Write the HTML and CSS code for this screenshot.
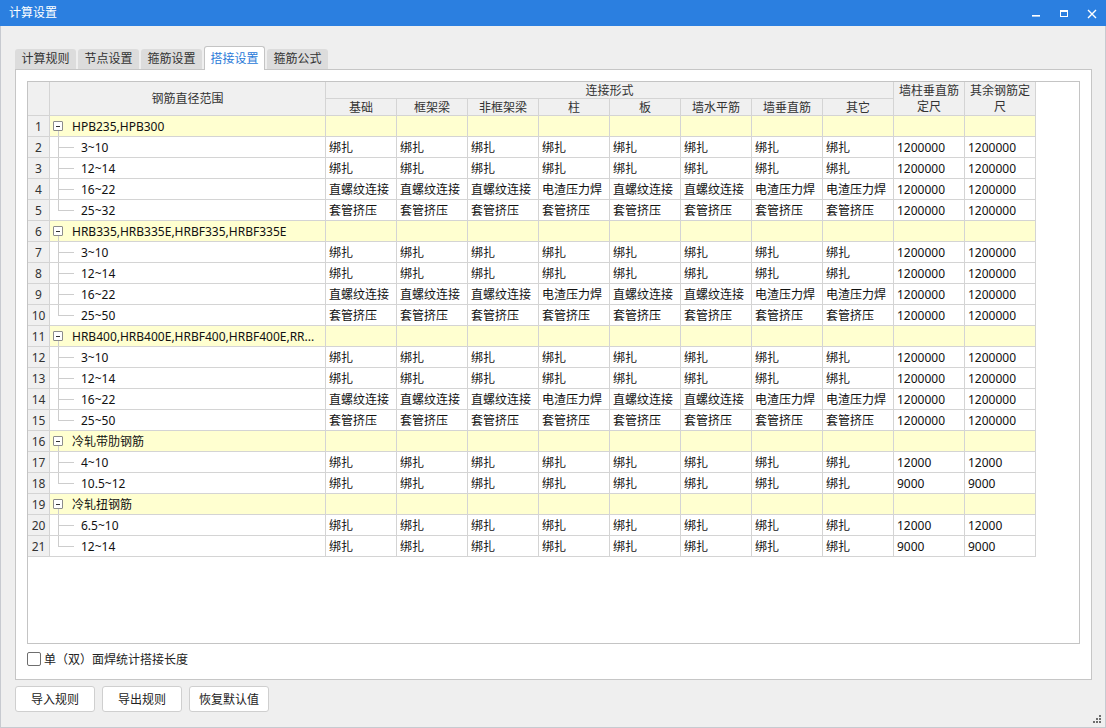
FILE: index.html
```html
<!DOCTYPE html>
<html lang="zh">
<head>
<meta charset="utf-8">
<title>计算设置</title>
<link rel="stylesheet" href="styles.css">
</head>
<body>
<div class="window">
  <div class="titlebar">
    <span class="title">计算设置</span>
    <svg class="controls" width="80" height="26" viewBox="0 0 80 26">
      <rect x="6" y="15" width="8" height="1.6" fill="#fff"/>
      <rect x="34.5" y="10.5" width="7" height="6" fill="none" stroke="#fff" stroke-width="1"/>
      <rect x="34" y="10" width="8" height="2" fill="#fff"/>
      <path d="M62 10 L70 18 M70 10 L62 18" stroke="#fff" stroke-width="1.4"/>
    </svg>
  </div>
  <div class="body">
    <div class="tabs">
      <div class="tab">计算规则</div>
      <div class="tab">节点设置</div>
      <div class="tab">箍筋设置</div>
      <div class="tab active">搭接设置</div>
      <div class="tab">箍筋公式</div>
    </div>
    <div class="panel">
      <div class="grid">
        <div class="c h rn hrn"></div>
        <div class="c h hname">钢筋直径范围</div>
        <div class="c h hconn">连接形式</div>
        <div class="c h hfix1">墙柱垂直筋定尺</div>
        <div class="c h hfix2">其余钢筋定尺</div>
        <div class="c h sub">基础</div>
        <div class="c h sub">框架梁</div>
        <div class="c h sub">非框架梁</div>
        <div class="c h sub">柱</div>
        <div class="c h sub">板</div>
        <div class="c h sub">墙水平筋</div>
        <div class="c h sub">墙垂直筋</div>
        <div class="c h sub">其它</div>

        <div class="c rn">1</div><div class="c nm g grp"><span class="tog"></span>HPB235,HPB300</div><div class="c g"></div><div class="c g"></div><div class="c g"></div><div class="c g"></div><div class="c g"></div><div class="c g"></div><div class="c g"></div><div class="c g"></div><div class="c g"></div><div class="c g"></div>
        <div class="c rn">2</div><div class="c nm ch">3~10</div><div class="c">绑扎</div><div class="c">绑扎</div><div class="c">绑扎</div><div class="c">绑扎</div><div class="c">绑扎</div><div class="c">绑扎</div><div class="c">绑扎</div><div class="c">绑扎</div><div class="c">1200000</div><div class="c">1200000</div>
        <div class="c rn">3</div><div class="c nm ch">12~14</div><div class="c">绑扎</div><div class="c">绑扎</div><div class="c">绑扎</div><div class="c">绑扎</div><div class="c">绑扎</div><div class="c">绑扎</div><div class="c">绑扎</div><div class="c">绑扎</div><div class="c">1200000</div><div class="c">1200000</div>
        <div class="c rn">4</div><div class="c nm ch">16~22</div><div class="c">直螺纹连接</div><div class="c">直螺纹连接</div><div class="c">直螺纹连接</div><div class="c">电渣压力焊</div><div class="c">直螺纹连接</div><div class="c">直螺纹连接</div><div class="c">电渣压力焊</div><div class="c">电渣压力焊</div><div class="c">1200000</div><div class="c">1200000</div>
        <div class="c rn">5</div><div class="c nm ch last">25~32</div><div class="c">套管挤压</div><div class="c">套管挤压</div><div class="c">套管挤压</div><div class="c">套管挤压</div><div class="c">套管挤压</div><div class="c">套管挤压</div><div class="c">套管挤压</div><div class="c">套管挤压</div><div class="c">1200000</div><div class="c">1200000</div>

        <div class="c rn">6</div><div class="c nm g grp"><span class="tog"></span>HRB335,HRB335E,HRBF335,HRBF335E</div><div class="c g"></div><div class="c g"></div><div class="c g"></div><div class="c g"></div><div class="c g"></div><div class="c g"></div><div class="c g"></div><div class="c g"></div><div class="c g"></div><div class="c g"></div>
        <div class="c rn">7</div><div class="c nm ch">3~10</div><div class="c">绑扎</div><div class="c">绑扎</div><div class="c">绑扎</div><div class="c">绑扎</div><div class="c">绑扎</div><div class="c">绑扎</div><div class="c">绑扎</div><div class="c">绑扎</div><div class="c">1200000</div><div class="c">1200000</div>
        <div class="c rn">8</div><div class="c nm ch">12~14</div><div class="c">绑扎</div><div class="c">绑扎</div><div class="c">绑扎</div><div class="c">绑扎</div><div class="c">绑扎</div><div class="c">绑扎</div><div class="c">绑扎</div><div class="c">绑扎</div><div class="c">1200000</div><div class="c">1200000</div>
        <div class="c rn">9</div><div class="c nm ch">16~22</div><div class="c">直螺纹连接</div><div class="c">直螺纹连接</div><div class="c">直螺纹连接</div><div class="c">电渣压力焊</div><div class="c">直螺纹连接</div><div class="c">直螺纹连接</div><div class="c">电渣压力焊</div><div class="c">电渣压力焊</div><div class="c">1200000</div><div class="c">1200000</div>
        <div class="c rn">10</div><div class="c nm ch last">25~50</div><div class="c">套管挤压</div><div class="c">套管挤压</div><div class="c">套管挤压</div><div class="c">套管挤压</div><div class="c">套管挤压</div><div class="c">套管挤压</div><div class="c">套管挤压</div><div class="c">套管挤压</div><div class="c">1200000</div><div class="c">1200000</div>

        <div class="c rn">11</div><div class="c nm g grp"><span class="tog"></span>HRB400,HRB400E,HRBF400,HRBF400E,RR...</div><div class="c g"></div><div class="c g"></div><div class="c g"></div><div class="c g"></div><div class="c g"></div><div class="c g"></div><div class="c g"></div><div class="c g"></div><div class="c g"></div><div class="c g"></div>
        <div class="c rn">12</div><div class="c nm ch">3~10</div><div class="c">绑扎</div><div class="c">绑扎</div><div class="c">绑扎</div><div class="c">绑扎</div><div class="c">绑扎</div><div class="c">绑扎</div><div class="c">绑扎</div><div class="c">绑扎</div><div class="c">1200000</div><div class="c">1200000</div>
        <div class="c rn">13</div><div class="c nm ch">12~14</div><div class="c">绑扎</div><div class="c">绑扎</div><div class="c">绑扎</div><div class="c">绑扎</div><div class="c">绑扎</div><div class="c">绑扎</div><div class="c">绑扎</div><div class="c">绑扎</div><div class="c">1200000</div><div class="c">1200000</div>
        <div class="c rn">14</div><div class="c nm ch">16~22</div><div class="c">直螺纹连接</div><div class="c">直螺纹连接</div><div class="c">直螺纹连接</div><div class="c">电渣压力焊</div><div class="c">直螺纹连接</div><div class="c">直螺纹连接</div><div class="c">电渣压力焊</div><div class="c">电渣压力焊</div><div class="c">1200000</div><div class="c">1200000</div>
        <div class="c rn">15</div><div class="c nm ch last">25~50</div><div class="c">套管挤压</div><div class="c">套管挤压</div><div class="c">套管挤压</div><div class="c">套管挤压</div><div class="c">套管挤压</div><div class="c">套管挤压</div><div class="c">套管挤压</div><div class="c">套管挤压</div><div class="c">1200000</div><div class="c">1200000</div>

        <div class="c rn">16</div><div class="c nm g grp"><span class="tog"></span>冷轧带肋钢筋</div><div class="c g"></div><div class="c g"></div><div class="c g"></div><div class="c g"></div><div class="c g"></div><div class="c g"></div><div class="c g"></div><div class="c g"></div><div class="c g"></div><div class="c g"></div>
        <div class="c rn">17</div><div class="c nm ch">4~10</div><div class="c">绑扎</div><div class="c">绑扎</div><div class="c">绑扎</div><div class="c">绑扎</div><div class="c">绑扎</div><div class="c">绑扎</div><div class="c">绑扎</div><div class="c">绑扎</div><div class="c">12000</div><div class="c">12000</div>
        <div class="c rn">18</div><div class="c nm ch last">10.5~12</div><div class="c">绑扎</div><div class="c">绑扎</div><div class="c">绑扎</div><div class="c">绑扎</div><div class="c">绑扎</div><div class="c">绑扎</div><div class="c">绑扎</div><div class="c">绑扎</div><div class="c">9000</div><div class="c">9000</div>

        <div class="c rn">19</div><div class="c nm g grp"><span class="tog"></span>冷轧扭钢筋</div><div class="c g"></div><div class="c g"></div><div class="c g"></div><div class="c g"></div><div class="c g"></div><div class="c g"></div><div class="c g"></div><div class="c g"></div><div class="c g"></div><div class="c g"></div>
        <div class="c rn">20</div><div class="c nm ch">6.5~10</div><div class="c">绑扎</div><div class="c">绑扎</div><div class="c">绑扎</div><div class="c">绑扎</div><div class="c">绑扎</div><div class="c">绑扎</div><div class="c">绑扎</div><div class="c">绑扎</div><div class="c">12000</div><div class="c">12000</div>
        <div class="c rn">21</div><div class="c nm ch last">12~14</div><div class="c">绑扎</div><div class="c">绑扎</div><div class="c">绑扎</div><div class="c">绑扎</div><div class="c">绑扎</div><div class="c">绑扎</div><div class="c">绑扎</div><div class="c">绑扎</div><div class="c">9000</div><div class="c">9000</div>
      </div>
      <label class="check"><span class="box"></span>单（双）面焊统计搭接长度</label>
    </div>
    <div class="buttons">
      <button class="btn">导入规则</button>
      <button class="btn">导出规则</button>
      <button class="btn">恢复默认值</button>
    </div>
    <svg class="grip" width="9" height="9" viewBox="0 0 9 9">
      <rect x="6" y="0" width="2" height="2" fill="#6d6d6d"/>
      <rect x="3" y="3" width="2" height="2" fill="#6d6d6d"/>
      <rect x="6" y="3" width="2" height="2" fill="#6d6d6d"/>
      <rect x="0" y="6" width="2" height="2" fill="#6d6d6d"/>
      <rect x="3" y="6" width="2" height="2" fill="#6d6d6d"/>
      <rect x="6" y="6" width="2" height="2" fill="#6d6d6d"/>
    </svg>
  </div>
</div>
</body>
</html>
```

FILE: styles.css
```css
* { box-sizing: border-box; }
html, body { margin: 0; padding: 0; }
body {
  width: 1106px;
  height: 728px;
  overflow: hidden;
  font-family: "Noto Sans", "Noto Sans CJK SC", sans-serif;
  font-size: 12px;
  color: #1b1b1b;
  background: #efefef;
}
.window { width: 1106px; height: 728px; display: flex; flex-direction: column; }
.titlebar {
  height: 26px;
  flex: none;
  background: #2b7fe0;
  display: flex;
  align-items: center;
  justify-content: space-between;
}
.title { color: #fff; padding-left: 9px; line-height: 26px; font-size: 12px; }
.controls { display: block; }
.body {
  position: relative;
  flex: 1;
  background: #efefef;
  border: 1px solid #c7cad0;
  border-top: none;
  padding: 20px 0 0 14px;
}
.tabs { display: flex; align-items: flex-end; gap: 2px; height: 23px; }
.tab {
  width: 61px;
  height: 20px;
  line-height: 20px;
  text-align: center;
  background: #dcdcdc;
  color: #333;
  border-radius: 3px 3px 0 0;
}
.tab.active {
  position: relative;
  height: 24px;
  margin-bottom: -1px;
  padding-top: 2px;
  background: #fff;
  color: #2a7ad8;
  border: 1px solid #c4c4c4;
  border-bottom: none;
  z-index: 1;
}
.panel {
  width: 1077px;
  height: 611px;
  background: #fff;
  border: 1px solid #c6c6c6;
  padding: 11px 11px 0 11px;
}
.grid {
  height: 563px;
  border: 1px solid #c4c4c4;
  display: grid;
  grid-template-columns: 22px 276px repeat(10, 71px);
  grid-template-rows: 17px 17px repeat(21, 21px);
  align-content: start;
  background: #fff;
}
.c {
  border-right: 1px solid #d4d4d4;
  border-bottom: 1px solid #d4d4d4;
  padding-left: 3px;
  padding-top: 1px;
  line-height: 19px;
  white-space: nowrap;
  overflow: hidden;
  position: relative;
  color: #111;
}
.h {
  background: #f0f0f0;
  color: #333;
  padding: 1px 1px 0;
  line-height: 16px;
  text-align: center;
  white-space: normal;
  display: flex;
  align-items: center;
  justify-content: center;
}
.hrn { grid-row: 1 / 3; grid-column: 1; }
.hname { grid-row: 1 / 3; grid-column: 2; }
.hconn { grid-row: 1; grid-column: 3 / 11; }
.hfix1 { grid-row: 1 / 3; grid-column: 11; }
.hfix2 { grid-row: 1 / 3; grid-column: 12; }
.rn {
  background: #f0f0f0;
  color: #333;
  text-align: center;
  padding-left: 0;
}
.g { background: #ffffd0; }
.grp { display: flex; align-items: center; padding-top: 0; }
.grp::after {
  content: "";
  position: absolute;
  left: 8px;
  top: 15px;
  bottom: -1px;
  width: 1px;
  background: #cdcdcd;
}
.tog {
  width: 10px;
  height: 10px;
  flex: none;
  border: 1px solid #8c8c8c;
  border-radius: 1px;
  background: #fff;
  margin-right: 9px;
  position: relative;
}
.tog::before {
  content: "";
  position: absolute;
  left: 2px;
  top: 3.5px;
  width: 4px;
  height: 1px;
  background: #333;
}
.ch { padding-left: 31px; }
.ch::before {
  content: "";
  position: absolute;
  left: 8px;
  top: -1px;
  bottom: -1px;
  width: 1px;
  background: #cdcdcd;
}
.ch.last::before { bottom: auto; height: 11px; }
.ch::after {
  content: "";
  position: absolute;
  left: 8px;
  top: 10px;
  width: 16px;
  height: 1px;
  background: #cdcdcd;
}
.check {
  display: flex;
  align-items: center;
  gap: 3px;
  margin-top: 8px;
  height: 14px;
  color: #222;
}
.box {
  width: 14px;
  height: 14px;
  border: 1px solid #6e6e6e;
  border-radius: 2px;
  background: #fff;
}
.buttons { display: flex; gap: 7px; margin-top: 6px; }
.btn {
  width: 80px;
  height: 26px;
  background: #fff;
  border: 1px solid #cfcfcf;
  border-radius: 3px;
  font-family: "Noto Sans", "Noto Sans CJK SC", sans-serif;
  font-size: 12px;
  color: #222;
  padding: 0;
}
.grip { position: absolute; right: 3px; bottom: 3px; }
```
